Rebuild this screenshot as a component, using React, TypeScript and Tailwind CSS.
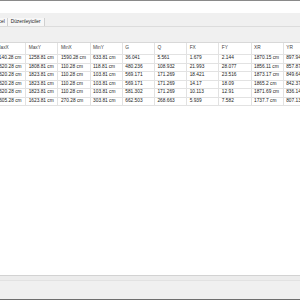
const cols = ["MaxX", "MaxY", "MinX", "MinY", "G", "Q", "FX", "FY", "XR", "YR"];

const rows = [
  ["1140.28 cm", "1258.81 cm", "1590.28 cm", "633.81 cm", "36.041", "5.561", "1.679", "2.144", "1870.15 cm", "897.94 cm"],
  ["1620.28 cm", "1808.81 cm", "110.28 cm", "118.81 cm", "480.236", "108.932", "21.993", "28.077", "1856.11 cm", "857.87 cm"],
  ["1620.28 cm", "1823.81 cm", "110.28 cm", "103.81 cm", "569.171", "171.269", "18.421", "23.516", "1873.17 cm", "849.64 cm"],
  ["1620.28 cm", "1823.81 cm", "110.28 cm", "103.81 cm", "569.171", "171.269", "14.17", "18.09", "1865.2 cm", "842.37 cm"],
  ["1620.28 cm", "1823.81 cm", "110.28 cm", "103.81 cm", "581.302", "171.269", "10.113", "12.91", "1871.69 cm", "836.14 cm"],
  ["1605.28 cm", "1623.81 cm", "270.28 cm", "303.81 cm", "662.503", "268.663", "5.939", "7.582", "1737.7 cm", "807.13 cm"],
];

export default function App() {
  return (
    <div
      className="w-[300px] h-[300px] overflow-hidden bg-white flex flex-col text-[4.8px] leading-none text-[#222]"
      style={{ fontFamily: '"Liberation Sans", Arial, sans-serif' }}
    >
      {/* window top edge + blank title area */}
      <div className="h-[1px] bg-[#8a8a8a]" />
      <div className="h-[12px] bg-white" />

      {/* menu / tabs */}
      <div className="h-[29px] bg-[#f0f0f0] flex flex-col">
        <div className="h-[5px]" />
        <div className="h-[9px] flex items-stretch border-b border-[#dcdcdc]">
          <div className="ml-[-8px] pl-[1px] pr-[2px] flex items-center border-r border-[#d0d0d0] bg-[#f7f7f7]">
            Excel
          </div>
          <div className="px-[3px] flex items-center border-r border-[#d0d0d0] bg-[#f7f7f7]">
            Düzenleyiciler
          </div>
        </div>
      </div>

      {/* table */}
      <div className="border-t border-[#d8d8d8]">
        <div className="flex ml-[-6px] h-[12px] border-b border-[#e2e2e2]">
          {cols.map((c) => (
            <div
              key={c}
              className="w-[32.2px] shrink-0 border-r border-[#e2e2e2] pl-[2.5px] flex items-center text-[#444]"
            >
              {c}
            </div>
          ))}
        </div>
        {rows.map((r, i) => (
          <div key={i} className="flex ml-[-6px] h-[8.5px] border-b border-[#e2e2e2]">
            {r.map((v, j) => (
              <div
                key={j}
                className="w-[32.2px] shrink-0 border-r border-[#e2e2e2] pl-[2.5px] flex items-center whitespace-nowrap overflow-hidden"
              >
                {v}
              </div>
            ))}
          </div>
        ))}
      </div>

      <div className="flex-1 bg-white" />

      {/* status area */}
      <div className="h-[1px] bg-[#d2d2d2]" />
      <div className="h-[5px] bg-[#ececec] border-b border-[#e2e2e2]" />
      <div className="h-[18px] bg-[#f0f0f0]" />
      <div className="h-[1px] bg-[#6e6e6e]" />
    </div>
  );
}
